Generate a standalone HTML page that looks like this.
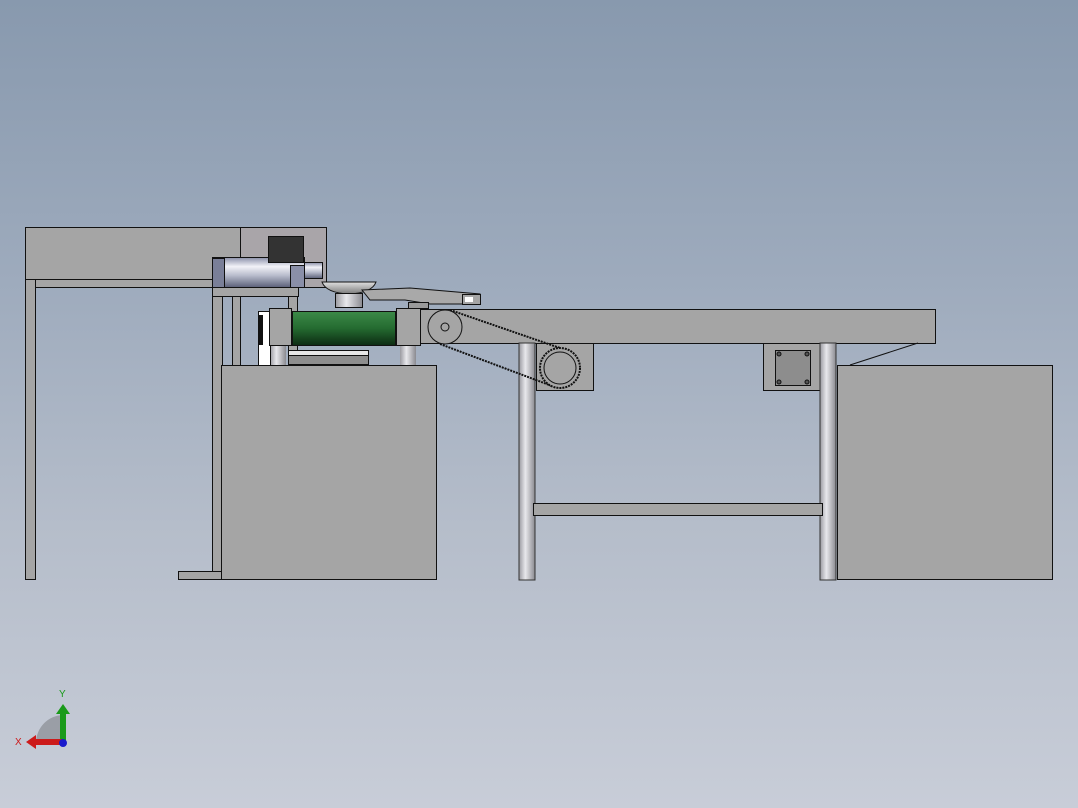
<!DOCTYPE html>
<html><head><meta charset="utf-8"><style>
html,body{margin:0;padding:0;width:1078px;height:808px;overflow:hidden}
body{background:linear-gradient(#8899ae 0%,#9eabbd 35%,#b5bdca 65%,#c8cdd8 100%)}
svg{display:block}
</style></head><body>
<svg width="1078" height="808" viewBox="0 0 1078 808" xmlns="http://www.w3.org/2000/svg">
<defs>
<linearGradient id="cyl" x1="0" y1="0" x2="0" y2="1">
<stop offset="0" stop-color="#8a8fa8"/><stop offset=".3" stop-color="#f2f2f8"/><stop offset=".6" stop-color="#b8bccc"/><stop offset="1" stop-color="#5a5f78"/></linearGradient>
<linearGradient id="grn" x1="0" y1="0" x2="0" y2="1">
<stop offset="0" stop-color="#3c8a48"/><stop offset=".5" stop-color="#246a30"/><stop offset="1" stop-color="#0c2a12"/></linearGradient>
<linearGradient id="leg" x1="0" y1="0" x2="1" y2="0">
<stop offset="0" stop-color="#9a9aa0"/><stop offset=".4" stop-color="#e8e8ec"/><stop offset="1" stop-color="#8a8a90"/></linearGradient>
<linearGradient id="bowl" x1="0" y1="0" x2="0" y2="1">
<stop offset="0" stop-color="#e0e0e0"/><stop offset="1" stop-color="#7a7a7a"/></linearGradient>
</defs>
<g stroke="#111" stroke-width="1">
<!-- left table -->
<rect x="25.5" y="227.5" width="215" height="52" fill="#a5a5a5"/>
<rect x="240.5" y="227.5" width="86" height="60" fill="#a9a5a9"/>
<rect x="25.5" y="279.5" width="10" height="300" fill="#a5a5a5"/>
<rect x="35.5" y="279.5" width="177" height="8" fill="#a5a5a5"/>
<rect x="212.5" y="287.5" width="10" height="285" fill="#a5a5a5"/>
<rect x="178.5" y="571.5" width="44" height="8" fill="#a5a5a5"/>
<!-- frame under cylinder -->
<rect x="212.5" y="286.5" width="86" height="10" fill="#a5a5a5"/>
<rect x="288.5" y="296.5" width="9" height="70" fill="#a5a5a5"/>
<rect x="232.5" y="296.5" width="8" height="70" fill="#a5a5a5"/>
<!-- lower box 1 -->
<rect x="221.5" y="365.5" width="215" height="214" fill="#a5a5a5"/>
<!-- posts -->
<rect x="270" y="345" width="16" height="20" fill="url(#leg)" stroke="none"/>
<rect x="400" y="345" width="16" height="20" fill="url(#leg)" stroke="none"/>
<!-- slider -->
<rect x="288.5" y="350.5" width="80" height="14" fill="#8e8e8e"/>
<rect x="288.5" y="350.5" width="80" height="5" fill="#e8e8e8"/>
<!-- cylinder -->
<rect x="212.5" y="257.5" width="92" height="30" fill="url(#cyl)"/>
<rect x="212.5" y="258.5" width="12" height="29" fill="#7a7f98"/>
<rect x="290.5" y="265.5" width="14" height="22" fill="#8a8fa8"/>
<rect x="304.5" y="262.5" width="18" height="16" fill="url(#cyl)"/>
<rect x="268.5" y="236.5" width="35" height="26" fill="#333"/>
<!-- bowl -->
<path d="M322 282 L376 282 Q372 293 349 294 Q326 293 322 282Z" fill="url(#bowl)"/>
<rect x="335.5" y="293.5" width="27" height="14" fill="url(#leg)"/>
<!-- arm -->
<path d="M362 290 L410 288 L480 294 L480 304 L430 304 L405 300 L370 300Z" fill="#a9a9a9"/>
<rect x="462.5" y="294.5" width="18" height="10" fill="#a5a5a5"/>
<rect x="465" y="297" width="8" height="5" fill="#fff" stroke="none"/>
<rect x="408.5" y="302.5" width="20" height="6" fill="#9a9a9a"/>
<!-- roller blocks -->
<rect x="258.5" y="311.5" width="12" height="54" fill="#fff"/>
<rect x="259" y="315" width="4" height="30" fill="#111" stroke="none"/>
<rect x="269.5" y="308.5" width="22" height="37" fill="#a5a5a5"/>
<rect x="292.5" y="311.5" width="103" height="34" fill="url(#grn)"/>
<rect x="396.5" y="308.5" width="24" height="37" fill="#a5a5a5"/>
<!-- conveyor -->
<rect x="420.5" y="309.5" width="515" height="34" fill="#a5a5a5"/>
<rect x="536.5" y="343.5" width="57" height="47" fill="#a5a5a5"/>
<rect x="763.5" y="343.5" width="57" height="47" fill="#a5a5a5"/>
<rect x="775.5" y="350.5" width="35" height="35" fill="#8d8d8d"/>
<circle cx="779" cy="354" r="2" fill="#555"/><circle cx="807" cy="354" r="2" fill="#555"/>
<circle cx="779" cy="382" r="2" fill="#555"/><circle cx="807" cy="382" r="2" fill="#555"/>
<!-- legs -->
<rect x="519" y="343" width="16" height="237" fill="url(#leg)" stroke="#333"/>
<rect x="820" y="343" width="16" height="237" fill="url(#leg)" stroke="#333"/>
<rect x="533.5" y="503.5" width="289" height="12" fill="#a5a5a5"/>
<!-- right box -->
<rect x="837.5" y="365.5" width="215" height="214" fill="#a5a5a5"/>
<line x1="850" y1="365" x2="918" y2="343"/>
<!-- pulley + belt -->
<circle cx="445" cy="327" r="17" fill="#a5a5a5"/>
<circle cx="445" cy="327" r="4" fill="#a5a5a5"/>
<line x1="450" y1="310" x2="560" y2="348" stroke-width="2" stroke-dasharray="2 1"/>
<line x1="440" y1="344" x2="552" y2="386" stroke-width="2" stroke-dasharray="2 1"/>
<circle cx="560" cy="368" r="20" fill="#a5a5a5" stroke-width="2" stroke-dasharray="2 1"/>
<circle cx="560" cy="368" r="16" fill="#a5a5a5"/>
</g>
<!-- axis triad -->
<path d="M36 742 A28 28 0 0 1 63 715 L63 742Z" fill="#9a9ea6"/>
<rect x="60" y="712" width="6" height="30" fill="#1a9a1a"/>
<path d="M56 714 L63 704 L70 714Z" fill="#1a9a1a"/>
<rect x="34" y="739" width="28" height="6" fill="#cc1a1a"/>
<path d="M36 735 L26 742 L36 749Z" fill="#cc1a1a"/>
<circle cx="63" cy="743" r="4" fill="#1a1acc"/>
<text x="59" y="697" font-family="Liberation Sans,sans-serif" font-size="10" fill="#1a9a1a">Y</text>
<text x="15" y="745" font-family="Liberation Sans,sans-serif" font-size="10" fill="#cc1a1a">X</text>
</svg>
</body></html>
